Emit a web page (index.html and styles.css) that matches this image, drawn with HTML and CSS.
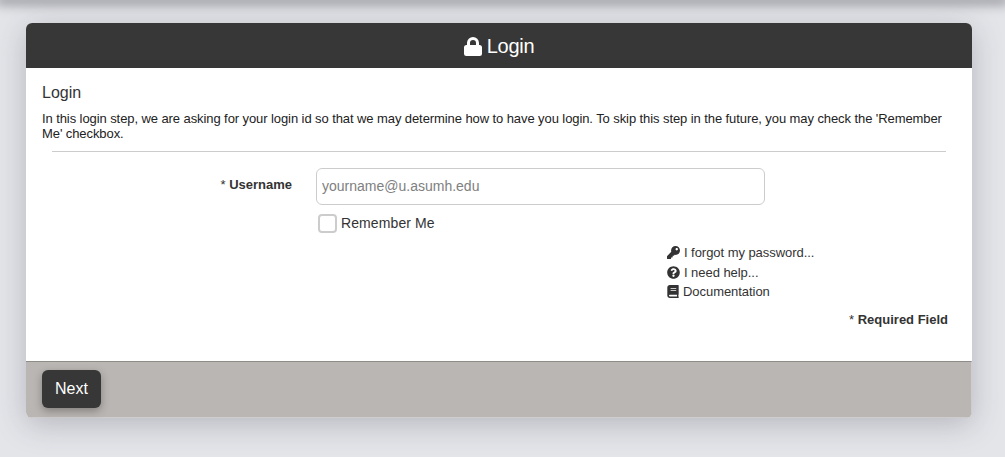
FILE: index.html
```html
<!DOCTYPE html>
<html lang="en">
<head>
<meta charset="utf-8">
<title>Login</title>
<link rel="stylesheet" href="styles.css">
</head>
<body>
<div class="topbar"></div>
<main class="panel">
  <header class="panel-head">
    <svg class="lock" viewBox="0 0 18 19"><path fill="currentColor" fill-rule="evenodd" d="M3 8V6a6 6 0 0 1 12 0v2h.5A2.5 2.5 0 0 1 18 10.500v6a2.500 2.500 0 0 1-2.500 2.500h-13A2.500 2.500 0 0 1 0 16.500v-6A2.500 2.500 0 0 1 2.500 8zM6 8h6V6a3 3 0 0 0-6 0z"/></svg>
    <span class="head-text">Login</span>
  </header>
  <section class="panel-body">
    <h2 class="title">Login</h2>
    <p class="intro">In this login step, we are asking for your login id so that we may determine how to have you login. To skip this step in the future, you may check the 'Remember Me' checkbox.</p>
    <hr class="rule">
    <div class="field">
      <label class="field-label" for="user"><span class="star">*</span> Username</label>
      <input class="field-input" id="user" type="text" placeholder="yourname@u.asumh.edu">
    </div>
    <label class="remember"><span class="check"></span>Remember Me</label>
    <ul class="links">
      <li class="link"><svg class="ico" viewBox="0 0 512 512"><path fill="currentColor" d="M512 176.001C512 273.203 433.202 352 336 352c-11.22 0-22.19-1.062-32.827-3.069l-24.012 27.014A23.999 23.999 0 0 1 261.223 384H224v40c0 13.255-10.745 24-24 24h-40v40c0 13.255-10.745 24-24 24H24c-13.255 0-24-10.745-24-24v-78.059c0-6.365 2.529-12.47 7.029-16.971l161.802-161.802C163.108 213.814 160 195.271 160 176 160 78.798 238.797.001 335.999 0 433.488-.001 512 78.511 512 176.001zM336 128c0 26.51 21.49 48 48 48s48-21.49 48-48-21.49-48-48-48-48 21.49-48 48z"/></svg>I forgot my password...</li>
      <li class="link"><svg class="ico" viewBox="0 0 512 512"><path fill="currentColor" d="M504 256c0 136.997-111.043 248-248 248S8 392.997 8 256C8 119.083 119.043 8 256 8s248 111.083 248 248zM262.655 90c-54.497 0-89.255 22.957-116.549 63.758-3.536 5.286-2.353 12.415 2.715 16.258l34.699 26.31c5.205 3.947 12.621 3.008 16.665-2.122 17.864-22.658 30.113-35.797 57.303-35.797 20.429 0 45.698 13.148 45.698 32.958 0 14.976-12.363 22.667-32.534 33.976C247.128 238.528 216 254.941 216 296v4c0 6.627 5.373 12 12 12h56c6.627 0 12-5.373 12-12v-1.333c0-28.462 83.186-29.647 83.186-106.667 0-58.002-60.165-102-116.531-102zM256 338c-25.365 0-46 20.635-46 46 0 25.364 20.635 46 46 46s46-20.636 46-46c0-25.365-20.635-46-46-46z"/></svg>I need help...</li>
      <li class="link link-book"><svg class="ico ico-book" viewBox="0 0 448 512"><path fill="currentColor" d="M448 360V24c0-13.3-10.7-24-24-24H96C43 0 0 43 0 96v320c0 53 43 96 96 96h328c13.3 0 24-10.7 24-24v-16c0-7.500-3.500-14.300-8.900-18.700-4.200-15.400-4.200-59.300 0-74.700 5.400-4.300 8.900-11.100 8.900-18.600zM128 134c0-3.300 2.700-6 6-6h212c3.300 0 6 2.700 6 6v20c0 3.300-2.700 6-6 6H134c-3.300 0-6-2.700-6-6v-20zm0 64c0-3.300 2.700-6 6-6h212c3.300 0 6 2.700 6 6v20c0 3.300-2.700 6-6 6H134c-3.300 0-6-2.700-6-6v-20zm253.400 250H96c-17.700 0-32-14.300-32-32 0-17.600 14.400-32 32-32h285.400c-1.900 17.100-1.900 46.900 0 64z"/></svg>Documentation</li>
    </ul>
    <p class="required"><span class="star">*</span> Required Field</p>
  </section>
  <footer class="panel-foot">
    <button class="next" type="button">Next</button>
  </footer>
</main>
</body>
</html>
```
FILE: styles.css
```css
* { box-sizing: border-box; }
html, body { height: 100%; }
body {
  margin: 0;
  background: #e4e5e9;
  font-family: "Liberation Sans", Arial, sans-serif;
  color: #333;
  overflow: hidden;
}
.topbar {
  height: 0;
  box-shadow: 0 0 12px 4px rgba(60, 60, 70, 0.55);
}
.panel {
  width: 946px;
  margin: 23px 0 0 26px;
  border-radius: 6px;
  background: #fff;
  overflow: hidden;
  box-shadow: 0 6px 30px rgba(60, 60, 80, 0.28);
}
.panel-head {
  height: 45px;
  padding-top: 1px;
  background: #373737;
  color: #fff;
  display: flex;
  align-items: center;
  justify-content: center;
  gap: 5px;
  font-size: 20px;
}
.head-text { letter-spacing: -0.3px; }
.lock { width: 18px; height: 19px; }
.panel-body {
  height: 293px;
  padding: 15px 16px 0;
}
.title {
  margin: 0 0 8px;
  font-size: 16px;
  font-weight: 400;
  line-height: 20px;
}
.intro {
  margin: 0;
  font-size: 13px;
  letter-spacing: -0.085px;
  line-height: 15px;
  color: #222;
}
.rule {
  margin: 10px 10px 16px;
  border: 0;
  border-top: 1px solid #ccc;
}
.star { font-weight: 400; }
.field {
  display: flex;
  align-items: flex-start;
}
.field-label {
  width: 250px;
  padding-top: 9px;
  text-align: right;
  font-size: 13px;
  font-weight: 700;
  line-height: 16px;
}
.field-input {
  width: 449px;
  height: 37px;
  margin-left: 24px;
  padding: 0 5px 2px;
  border: 1px solid #ccc;
  border-radius: 6px;
  font: 14px "Liberation Sans", Arial, sans-serif;
}
.field-input::placeholder { color: #808080; opacity: 1; }
.remember {
  display: flex;
  align-items: flex-start;
  gap: 4px;
  margin: 9px 0 0 276px;
  height: 19px;
  font-size: 14px;
  line-height: 18px;
  letter-spacing: 0.1px;
}
.check {
  width: 19px;
  height: 19px;
  border: 2px solid #ccc;
  border-radius: 4px;
}
.links {
  list-style: none;
  margin: 10px 0 0 625px;
  padding: 0;
  font-size: 13px;
  letter-spacing: -0.05px;
}
.link {
  display: flex;
  align-items: center;
  gap: 4px;
  height: 19.5px;
}
.ico { width: 13px; height: 13px; }
.ico-book { width: 12px; }
.required {
  margin: 10px 8px 0 0;
  text-align: right;
  font-size: 13px;
  font-weight: 700;
  line-height: 16px;
}
.panel-foot {
  height: 57px;
  padding: 8px 16px 0;
  background: #bab6b3;
  border-top: 1px solid #8f8b87;
  border-right: 1px solid #cfcdcb;
  border-bottom: 1px solid #cfcdcb;
}
.next {
  width: 59px;
  height: 38px;
  border: 0;
  border-radius: 6px;
  background: #373737;
  color: #fff;
  font: 16px "Liberation Sans", Arial, sans-serif;
  box-shadow: 0 3px 8px rgba(0, 0, 0, 0.3);
}
```
